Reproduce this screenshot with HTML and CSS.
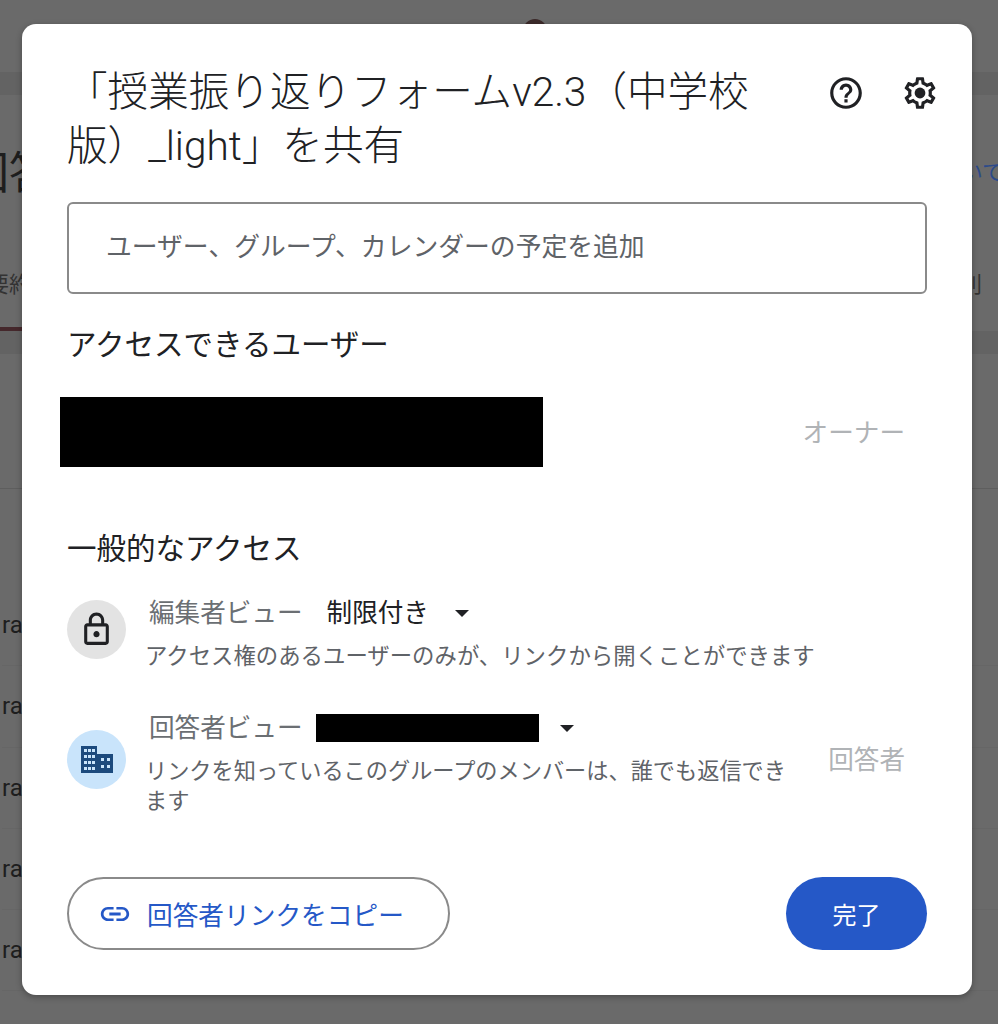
FILE: index.html
```html
<!DOCTYPE html>
<html lang="ja">
<head>
    <meta charset="UTF-8">
    <meta name="viewport" content="width=device-width, initial-scale=1.0">
    <title>共有</title>
    <link rel="stylesheet" href="styles.css">
</head>
<body>

<!-- Page dimmed behind the dialog -->
<div class="page">
    <div class="page-top">
        <div class="page-avatar"></div>
    </div>
    <div class="page-band"></div>
    <div class="page-head">
        <span class="page-title">回答</span>
        <span class="page-link">について</span>
    </div>
    <div class="page-tabs">
        <span class="page-tab active">要約</span>
        <span class="page-tab">個別</span>
    </div>
    <div class="page-band"></div>
    <div class="page-section"></div>
    <div class="page-rows">
        <div class="page-row">ra</div>
        <div class="page-row">ra</div>
        <div class="page-row">ra</div>
        <div class="page-row">ra</div>
        <div class="page-row">ra</div>
    </div>
</div>

<div class="dialog">
    <div class="dialog-head">
        <h1>「授業振り返りフォームv2.3（中学校版）_light」を共有</h1>
        <div class="head-icons">
            <svg width="38" height="38" viewBox="0 0 24 24" fill="#202124"><path d="M11 18h2v-2h-2v2zm1-16C6.48 2 2 6.48 2 12s4.48 10 10 10 10-4.48 10-10S17.52 2 12 2zm0 18c-4.41 0-8-3.59-8-8s3.59-8 8-8 8 3.59 8 8-3.59 8-8 8zm0-14c-2.21 0-4 1.79-4 4h2c0-1.1.9-2 2-2s2 .9 2 2c0 2-3 1.75-3 5h2c0-2.25 3-2.5 3-5 0-2.21-1.79-4-4-4z"/></svg>
            <svg width="38" height="38" viewBox="0 0 24 24" fill="#202124"><path d="M19.43 12.98c.04-.32.07-.64.07-.98s-.03-.66-.07-.98l2.11-1.65c.19-.15.24-.42.12-.64l-2-3.46c-.12-.22-.39-.3-.61-.22l-2.49 1c-.52-.4-1.08-.73-1.69-.98l-.38-2.65C14.46 2.18 14.25 2 14 2h-4c-.25 0-.46.18-.49.42l-.38 2.65c-.61.25-1.17.59-1.69.98l-2.49-1c-.23-.09-.49 0-.61.22l-2 3.46c-.13.22-.07.49.12.64l2.11 1.65c-.04.32-.07.65-.07.98s.03.66.07.98l-2.11 1.65c-.19.15-.24.42-.12.64l2 3.46c.12.22.39.3.61.22l2.49-1c.52.4 1.08.73 1.69.98l.38 2.65c.03.24.24.42.49.42h4c.25 0 .46-.18.49-.42l.38-2.65c.61-.25 1.17-.59 1.69-.98l2.49 1c.23.09.49 0 .61-.22l2-3.46c.12-.22.07-.49-.12-.64l-2.11-1.65zM17.45 11.27c.04.31.05.52.05.73s-.02.43-.05.73l-.14 1.13.89.7 1.08.84-.7 1.21-1.27-.51-1.04-.42-.9.68c-.43.32-.84.56-1.25.73l-1.06.43-.16 1.13-.2 1.35h-1.4l-.19-1.35-.16-1.13-1.06-.43c-.43-.18-.83-.41-1.23-.71l-.91-.7-1.06.43-1.27.51-.7-1.21 1.08-.84.89-.7-.14-1.13c-.03-.31-.05-.54-.05-.74s.02-.43.05-.73l.14-1.13-.89-.7-1.08-.84.7-1.21 1.27.51 1.04.42.9-.68c.43-.32.84-.56 1.25-.73l1.06-.43.16-1.13.2-1.35h1.39l.19 1.35.16 1.13 1.06.43c.43.18.83.41 1.23.71l.91.7 1.06-.43 1.27-.51.7 1.21-1.07.85-.89.7.14 1.13z"/><circle cx="12" cy="12" r="3.4"/></svg>
        </div>
    </div>

    <div class="share-input">ユーザー、グループ、カレンダーの予定を追加</div>

    <h2 class="people-title">アクセスできるユーザー</h2>
    <div class="owner-row">
        <div class="redact owner-redact"></div>
        <span class="role">オーナー</span>
    </div>

    <h2 class="general-title">一般的なアクセス</h2>

    <div class="access-row">
        <div class="access-icon gray">
            <svg width="37" height="37" viewBox="0 0 24 24" fill="#202124"><path d="M18 8h-1V6c0-2.76-2.24-5-5-5S7 3.24 7 6v2H6c-1.1 0-2 .9-2 2v10c0 1.1.9 2 2 2h12c1.1 0 2-.9 2-2V10c0-1.1-.9-2-2-2zM9 6c0-1.66 1.34-3 3-3s3 1.34 3 3v2H9V6zm9 14H6V10h12v10zm-6-3c1.1 0 2-.9 2-2s-.9-2-2-2-2 .9-2 2 .9 2 2 2z"/></svg>
        </div>
        <div class="access-text">
            <div class="access-line">
                <span class="view-label">編集者ビュー</span>
                <span class="view-value">制限付き</span>
                <span class="caret"></span>
            </div>
            <p class="access-desc">アクセス権のあるユーザーのみが、リンクから開くことができます</p>
        </div>
    </div>

    <div class="access-row second">
        <div class="access-icon blue">
            <svg width="32" height="27" viewBox="0 0 32 27"><path fill="#1c4a7d" d="M0 0h16v8h16v19H0z"/><g fill="#c9e4fb"><rect x="3" y="3" width="3" height="3"/><rect x="7" y="3" width="3" height="3"/><rect x="11" y="3" width="3" height="3"/><rect x="3" y="9" width="3" height="3"/><rect x="7" y="9" width="3" height="3"/><rect x="11" y="9" width="3" height="3"/><rect x="3" y="15" width="3" height="3"/><rect x="7" y="15" width="3" height="3"/><rect x="11" y="15" width="3" height="3"/><rect x="3" y="21" width="3" height="3"/><rect x="7" y="21" width="3" height="3"/><rect x="11" y="21" width="3" height="3"/><rect x="20" y="12" width="3" height="3"/><rect x="26" y="12" width="3" height="3"/><rect x="20" y="19" width="3" height="3"/><rect x="26" y="19" width="3" height="3"/></g></svg>
        </div>
        <div class="access-text">
            <div class="access-line">
                <span class="view-label">回答者ビュー</span>
                <div class="redact group-redact"></div>
                <span class="caret"></span>
            </div>
            <p class="access-desc">リンクを知っているこのグループのメンバーは、誰でも返信できます</p>
        </div>
        <span class="role">回答者</span>
    </div>

    <div class="dialog-foot">
        <div class="copy-btn">
            <svg width="34" height="34" viewBox="0 0 24 24" fill="#2558c7"><path d="M3.9 12c0-1.71 1.39-3.1 3.1-3.1h4V7H7c-2.76 0-5 2.24-5 5s2.24 5 5 5h4v-1.9H7c-1.71 0-3.1-1.39-3.1-3.1zM8 13h8v-2H8v2zm9-6h-4v1.9h4c1.71 0 3.1 1.39 3.1 3.1s-1.39 3.1-3.1 3.1h-4V17h4c2.76 0 5-2.24 5-5s-2.24-5-5-5z"/></svg>
            <span>回答者リンクをコピー</span>
        </div>
        <div class="done-btn">完了</div>
    </div>
</div>

</body>
</html>
```

FILE: styles.css
```css
html, body {
    height: 100%;
    margin: 0;
    padding: 0;
    font-family: Roboto, "Noto Sans CJK JP", sans-serif;
    overflow: hidden;
}

body {
    position: relative;
    background: #6a6a6a;
}

/* dimmed page behind the dialog */
.page {
    height: 1024px;
    color: #1e1e1e;
    overflow: hidden;
}

.page-top {
    display: flex;
    justify-content: center;
    height: 72px;
    padding-top: 19px;
    box-sizing: border-box;
}

.page-avatar {
    width: 24px;
    height: 24px;
    margin-left: 72px;
    border-radius: 50%;
    background: #3c2a2a;
}

.page-band {
    height: 23px;
    background: #636363;
}

.page-head {
    display: flex;
    justify-content: space-between;
    align-items: center;
    height: 149px;
    white-space: nowrap;
}

.page-title {
    margin-left: -35px;
    font-size: 44px;
}

.page-link {
    margin-right: -6px;
    font-size: 22px;
    color: #2c4a8a;
}

.page-tabs {
    display: flex;
    justify-content: space-between;
    height: 87px;
    font-size: 22px;
    line-height: 30px;
    color: #333;
}

.page-tab {
    box-sizing: border-box;
    padding-top: 26px;
}

.page-tab.active {
    width: 120px;
    margin-left: -13px;
    border-bottom: 4px solid #45282c;
}

.page-tab:last-child {
    margin-right: 16px;
}

.page-section {
    height: 134px;
    border-bottom: 1px solid #5e5e5e;
}

.page-rows {
    padding-top: 96px;
}

.page-row {
    height: 81.3px;
    line-height: 81px;
    margin-left: 2px;
    font-size: 24px;
    border-bottom: 1px solid #666;
    box-sizing: border-box;
}

/* share dialog */
.dialog {
    position: absolute;
    top: 24px;
    left: 22px;
    width: 950px;
    height: 971px;
    box-sizing: border-box;
    padding: 41px 45px 0;
    background: #fff;
    border-radius: 14px;
    box-shadow: 0 2px 6px rgba(0,0,0,0.3);
    color: #202124;
}

.dialog-head {
    display: flex;
    justify-content: space-between;
    height: 108px;
}

.dialog-head h1 {
    width: 700px;
    margin: 0;
    font-size: 40.6px;
    line-height: 54px;
    font-weight: 300;
}

.head-icons {
    display: flex;
    gap: 36px;
    margin-top: 9px;
    margin-right: -12px;
}

.share-input {
    height: 92px;
    box-sizing: border-box;
    margin-top: 29px;
    padding-left: 37px;
    line-height: 86px;
    font-size: 25.8px;
    color: #5f6368;
    border: 2px solid #8a8a8a;
    border-radius: 6px;
}

.people-title, .general-title {
    margin: 0;
    font-size: 29.5px;
    font-weight: 400;
    line-height: 40px;
}

.people-title {
    margin-top: 31px;
}

.owner-row {
    display: flex;
    justify-content: space-between;
    align-items: center;
    height: 70px;
    margin-top: 32px;
    margin-left: -7px;
    padding-right: 22px;
}

.redact {
    background: #000;
}

.owner-redact {
    width: 483px;
    height: 70px;
}

.role {
    margin-bottom: 4px;
    font-size: 25.6px;
    color: #b0b3b6;
}

.general-title {
    margin-top: 62px;
}

.access-row {
    display: flex;
    align-items: center;
    margin-top: 25px;
}

.access-row.second {
    margin-top: 38px;
}

.access-row.second .role {
    margin-left: auto;
    margin-right: 22px;
    margin-bottom: 11px;
}

.access-icon {
    flex: none;
    display: flex;
    align-items: center;
    justify-content: center;
    width: 59px;
    height: 59px;
    margin-bottom: 7px;
    border-radius: 50%;
}

.access-icon.gray {
    background: #e3e3e3;
}

.access-icon.blue {
    background: #c9e4fb;
}

.access-text {
    margin-left: 19px;
}

.second .access-text {
    width: 650px;
}

.access-line {
    display: flex;
    align-items: center;
    height: 36px;
    font-size: 25.6px;
    margin-left: 4px;
}

.view-label, .view-value {
    margin-bottom: 4px;
}

.view-label {
    color: #6b6f73;
}

.view-value {
    margin-left: 24px;
}

.caret {
    width: 0;
    height: 0;
    margin-top: 2px;
    margin-left: 26px;
    border-left: 7px solid transparent;
    border-right: 7px solid transparent;
    border-top: 7px solid #202124;
}

.group-redact {
    width: 223px;
    height: 28px;
    margin-top: 2px;
    margin-left: 13px;
}

.second .caret {
    margin-left: 21px;
}

.access-desc {
    margin: 11px 0 0;
    font-size: 22.4px;
    line-height: 30px;
    color: #5f6368;
}

.second .access-desc {
    font-size: 22.2px;
}

.dialog-foot {
    position: absolute;
    left: 45px;
    right: 45px;
    bottom: 45px;
    display: flex;
    justify-content: space-between;
    align-items: center;
}

.copy-btn {
    display: flex;
    align-items: center;
    gap: 15px;
    width: 383px;
    height: 73px;
    box-sizing: border-box;
    padding-left: 29px;
    font-size: 25.7px;
    color: #2558c7;
    background: #fff;
    border: 2px solid #8a8a8a;
    border-radius: 37px;
}

.done-btn {
    display: flex;
    align-items: center;
    justify-content: center;
    width: 141px;
    height: 73px;
    font-size: 24px;
    color: #fff;
    background: #2558c7;
    border-radius: 37px;
}
```
